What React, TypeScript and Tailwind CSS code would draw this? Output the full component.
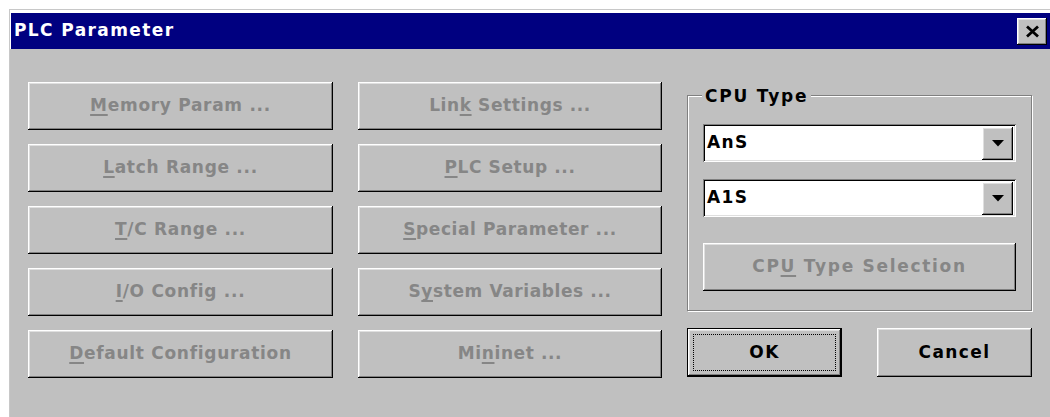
import React from 'react'

type Item = { text: string; at: number }

const leftButtons: Item[] = [
  { text: 'Memory Param ...', at: 0 },
  { text: 'Latch Range ...', at: 0 },
  { text: 'T/C Range ...', at: 0 },
  { text: 'I/O Config ...', at: 0 },
  { text: 'Default Configuration', at: 0 },
]

const middleButtons: Item[] = [
  { text: 'Link Settings ...', at: 3 },
  { text: 'PLC Setup ...', at: 0 },
  { text: 'Special Parameter ...', at: 0 },
  { text: 'System Variables ...', at: 1 },
  { text: 'Mininet ...', at: 2 },
]

// classic 3D bevels
const raised =
  'shadow-[inset_-1px_-1px_0_#000,inset_1px_1px_0_#fff,inset_-2px_-2px_0_#808080,inset_2px_2px_0_#dfdfdf]'
const sunken =
  'shadow-[inset_1px_1px_0_#808080,inset_-1px_-1px_0_#fff,inset_2px_2px_0_#000,inset_-2px_-2px_0_#dfdfdf]'

function Mnemonic({ item }: { item: Item }) {
  const { text, at } = item
  return (
    <span>
      {text.slice(0, at)}
      <span className="underline underline-offset-[3px] decoration-[1.5px]">{text[at]}</span>
      {text.slice(at + 1)}
    </span>
  )
}

function DisabledButton({ item, className = '' }: { item: Item; className?: string }) {
  return (
    <button
      disabled
      className={`h-[48px] w-full flex items-center justify-center bg-[#c0c0c0] text-[#868686] ${raised} ${className}`}
    >
      <Mnemonic item={item} />
    </button>
  )
}

function Combo({ value }: { value: string }) {
  return (
    <div className={`h-[38px] w-full bg-white flex items-center pl-[4px] pr-[3px] ${sunken}`}>
      <span className="flex-1 text-black">{value}</span>
      <div className={`w-[31px] h-[33px] mt-[1px] bg-[#c0c0c0] flex items-center justify-center ${raised}`}>
        <svg width="12" height="7" viewBox="0 0 12 7">
          <polygon points="0,0 12,0 6,6.5" fill="#000" />
        </svg>
      </div>
    </div>
  )
}

export default function App() {
  return (
    <div className="w-[1050px] h-[417px] overflow-hidden bg-white pl-[9px] pt-[9px] font-['DejaVu_Sans',sans-serif] font-bold text-[17px] tracking-[1.4px] select-none">
      <div className="h-full border-l border-t border-[#c8c8c8] bg-[#c0c0c0] flex flex-col">
        {/* caption */}
        <div className="bg-white pt-[3px] pl-px">
          <div className="h-[36px] bg-[#000080] flex items-center pl-[3px] pr-[3px]">
            <span className="flex-1 text-white">PLC Parameter</span>
            <button className={`w-[30px] h-[27px] bg-[#c0c0c0] flex items-center justify-center ${raised}`}>
              <svg width="15" height="13" viewBox="0 0 15 13">
                <path d="M2 1.5 L13 11.5 M13 1.5 L2 11.5" stroke="#000" strokeWidth="2.8" />
              </svg>
            </button>
          </div>
        </div>

        {/* body */}
        <div className="flex-1 flex pl-[18px] pt-[33px]">
          <div className="w-[305px] flex flex-col gap-[14px] tracking-[0.7px]">
            {leftButtons.map(b => (
              <DisabledButton key={b.text} item={b} />
            ))}
          </div>

          <div className="w-[304px] ml-[25px] flex flex-col gap-[14px] tracking-[0.6px]">
            {middleButtons.map(b => (
              <DisabledButton key={b.text} item={b} />
            ))}
          </div>

          <div className="w-[345px] ml-[25px] pt-[13px] flex flex-col">
            <div className="relative border border-[#808080] shadow-[1px_1px_0_#fff,inset_1px_1px_0_#fff] px-[15px] pt-[28px] pb-[19px] flex flex-col">
              <span className="absolute left-[14px] -top-[12px] bg-[#c0c0c0] px-[3px] text-black tracking-[1.8px]">CPU Type</span>
              <Combo value="AnS" />
              <div className="mt-[17px]">
                <Combo value="A1S" />
              </div>
              <DisabledButton item={{ text: 'CPU Type Selection', at: 2 }} className="mt-[26px] tracking-[1.7px]" />
            </div>

            <div className="mt-[17px] flex justify-between">
              <button className="w-[155px] h-[49px] border border-black bg-[#c0c0c0] p-0">
                <div className={`h-full w-full p-[5px] ${raised}`}>
                  <div className="h-full w-full border border-dotted border-black flex items-center justify-center text-black">
                    OK
                  </div>
                </div>
              </button>
              <button className={`w-[155px] h-[49px] bg-[#c0c0c0] flex items-center justify-center text-black ${raised}`}>
                Cancel
              </button>
            </div>
          </div>
        </div>
      </div>
    </div>
  )
}
